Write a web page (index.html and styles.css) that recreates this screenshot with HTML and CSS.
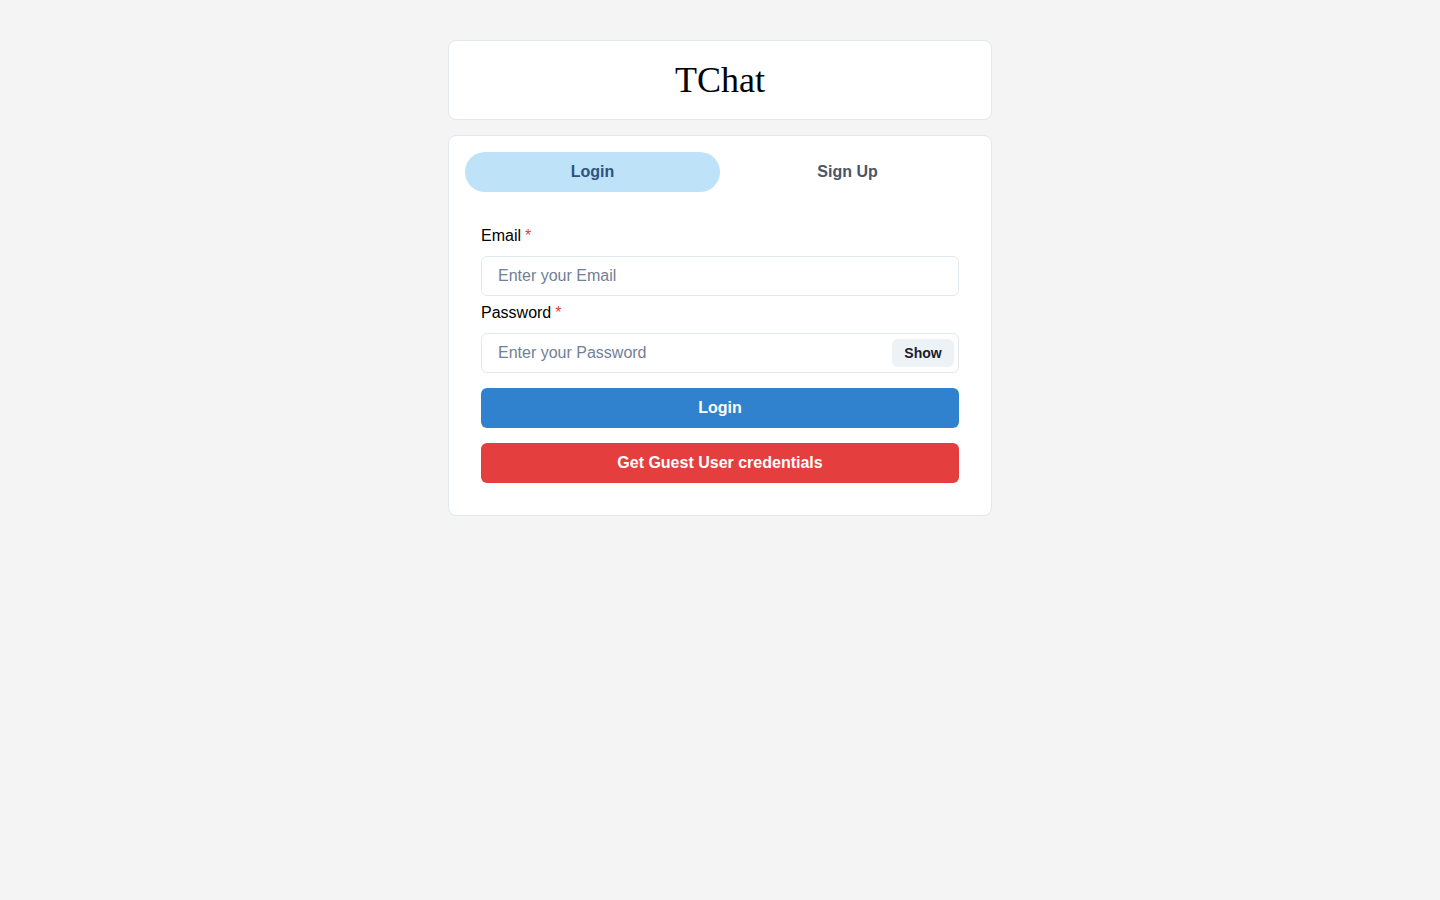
FILE: index.html
```html
<!DOCTYPE html>
<html>
<head>
<meta charset="utf-8">
<title>TChat</title>
<link rel="stylesheet" href="styles.css">
</head>
<body>
<div class="container">
  <div class="header-box">
    <h1 class="brand">TChat</h1>
  </div>
  <div class="auth-box">
    <div class="tablist">
      <button class="tab tab-active">Login</button>
      <button class="tab">Sign Up</button>
    </div>
    <div class="panel">
      <div class="field">
        <label class="label">Email<span class="req">*</span></label>
        <div class="input-group">
          <input class="input" type="email" placeholder="Enter your Email">
        </div>
      </div>
      <div class="field">
        <label class="label">Password<span class="req">*</span></label>
        <div class="input-group">
          <input class="input input-pw" type="password" placeholder="Enter your Password">
          <div class="right-el"><button class="show-btn">Show</button></div>
        </div>
      </div>
      <button class="btn btn-blue">Login</button>
      <button class="btn btn-red">Get Guest User credentials</button>
    </div>
  </div>
</div>
</body>
</html>
```
FILE: styles.css
```css
* { box-sizing: border-box; }
html, body { margin: 0; padding: 0; }
body {
  background: #f4f4f4;
  font-family: "Liberation Sans", Arial, sans-serif;
  color: #1a202c;
  line-height: 1.5;
}
.container {
  width: 576px;
  margin: 0 auto;
  padding: 0 16px;
  display: flex;
  flex-direction: column;
}
.header-box {
  margin: 40px 0 15px 0;
  background: #fff;
  border: 1px solid #e2e8f0;
  border-radius: 8px;
  padding: 12px;
  display: flex;
  justify-content: center;
}
.brand {
  margin: 0;
  font-family: "Liberation Serif", "Times New Roman", serif;
  font-weight: 400;
  font-size: 36px;
  line-height: 54px;
  color: #000;
}
.auth-box {
  background: #fff;
  border: 1px solid #e2e8f0;
  border-radius: 8px;
  padding: 16px;
}
.tablist {
  display: flex;
  margin-bottom: 16px;
}
.tab {
  flex: 1;
  height: 40px;
  border: 0;
  background: transparent;
  border-radius: 9999px;
  font-family: "Liberation Sans", Arial, sans-serif;
  font-size: 16px;
  font-weight: 700;
  color: #4a5568;
  cursor: pointer;
}
.tab-active {
  background: #bee3f8;
  color: #2c5282;
}
.panel {
  padding: 16px;
  display: flex;
  flex-direction: column;
}
.field + .field { margin-top: 5px; }
.label {
  display: block;
  font-size: 16px;
  line-height: 24px;
  margin-bottom: 8px;
  color: #000;
}
.req {
  color: #e53e3e;
  margin-left: 4px;
}
.input-group {
  position: relative;
}
.input {
  width: 100%;
  height: 40px;
  border: 1px solid #e2e8f0;
  border-radius: 6px;
  padding: 0 16px;
  font-family: "Liberation Sans", Arial, sans-serif;
  font-size: 16px;
  color: #1a202c;
  background: #fff;
  outline: none;
}
.input::placeholder { color: #718096; }
.input-pw { padding-right: 72px; }
.right-el {
  position: absolute;
  top: 0;
  right: 0;
  width: 72px;
  height: 40px;
  display: flex;
  align-items: center;
  justify-content: center;
}
.show-btn {
  height: 28px;
  padding: 0 12px;
  border: 0;
  border-radius: 6px;
  background: #edf2f7;
  font-family: "Liberation Sans", Arial, sans-serif;
  font-size: 14px;
  font-weight: 700;
  color: #1a202c;
}
.btn {
  width: 100%;
  height: 40px;
  border: 0;
  border-radius: 6px;
  margin-top: 15px;
  font-family: "Liberation Sans", Arial, sans-serif;
  font-size: 16px;
  font-weight: 700;
  color: #fff;
  cursor: pointer;
}
.btn-blue { background: #3182ce; }
.btn-red { background: #e53e3e; }
```
